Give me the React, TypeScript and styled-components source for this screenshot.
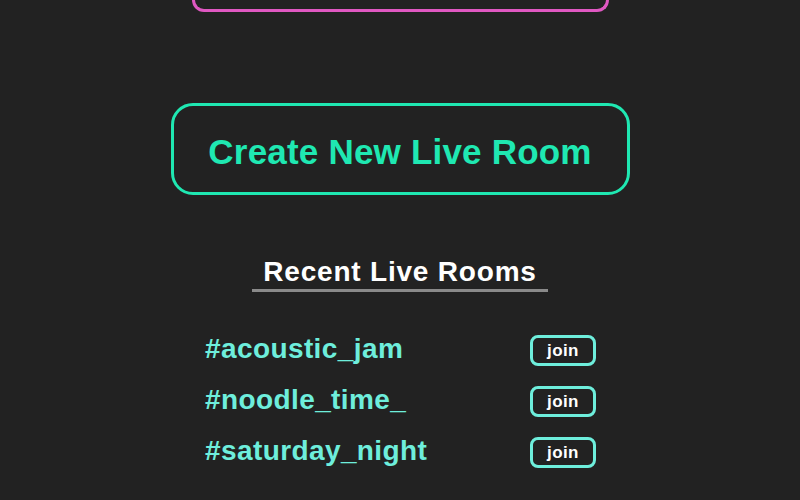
import React from "react";
import styled, { createGlobalStyle } from "styled-components";

const Global = createGlobalStyle`
  html, body { margin: 0; padding: 0; background: #222222; }
  body { font-family: "Liberation Sans", Arial, sans-serif; }
`;

const Page = styled.div`
  width: 800px;
  height: 500px;
  overflow: hidden;
  display: flex;
  flex-direction: column;
  align-items: center;
  background: #222222;
`;

const PinkCard = styled.div`
  width: 411px;
  height: 9px;
  border: 3px solid #e058c2;
  border-top: none;
  border-radius: 0 0 18px 18px;
`;

const CreateButton = styled.button`
  margin-top: 91px;
  width: 459px;
  height: 92px;
  border: 3px solid #1fe8b2;
  border-radius: 22px;
  background: transparent;
  color: #1fe8b2;
  font-family: "Liberation Sans", Arial, sans-serif;
  font-weight: 700;
  font-size: 35px;
  letter-spacing: 0.2px;
  padding: 5px 0 0;
  cursor: pointer;
`;

const Heading = styled.h2`
  margin: 60px 0 0;
  width: 296px;
  padding: 0;
  border-bottom: 3px solid #8a8a8a;
  text-align: center;
  color: #ffffff;
  font-size: 28px;
  font-weight: 700;
  line-height: 34px;
  letter-spacing: 0.8px;
`;

const List = styled.div`
  margin-top: 43px;
  width: 391px;
  margin-left: 1px;
  display: flex;
  flex-direction: column;
  gap: 20px;
`;

const Row = styled.div`
  display: flex;
  align-items: center;
  justify-content: space-between;
  height: 31px;
`;

const RoomName = styled.span`
  color: #6eeedc;
  font-size: 28px;
  font-weight: 700;
  line-height: 31px;
  letter-spacing: 0.4px;
  margin-top: -4px;
`;

const JoinButton = styled.button`
  width: 66px;
  height: 31px;
  border: 3px solid #6eeedc;
  border-radius: 8px;
  background: transparent;
  color: #ffffff;
  font-family: "Liberation Sans", Arial, sans-serif;
  font-weight: 700;
  font-size: 17px;
  letter-spacing: 0.4px;
  padding: 0;
  cursor: pointer;
`;

const rooms = ["#acoustic_jam", "#noodle_time_", "#saturday_night"];

export default function App() {
  return (
    <>
      <Global />
      <Page>
        <PinkCard />
        <CreateButton>Create New Live Room</CreateButton>
        <Heading>Recent Live Rooms</Heading>
        <List>
          {rooms.map((r) => (
            <Row key={r}>
              <RoomName>{r}</RoomName>
              <JoinButton>join</JoinButton>
            </Row>
          ))}
        </List>
      </Page>
    </>
  );
}
